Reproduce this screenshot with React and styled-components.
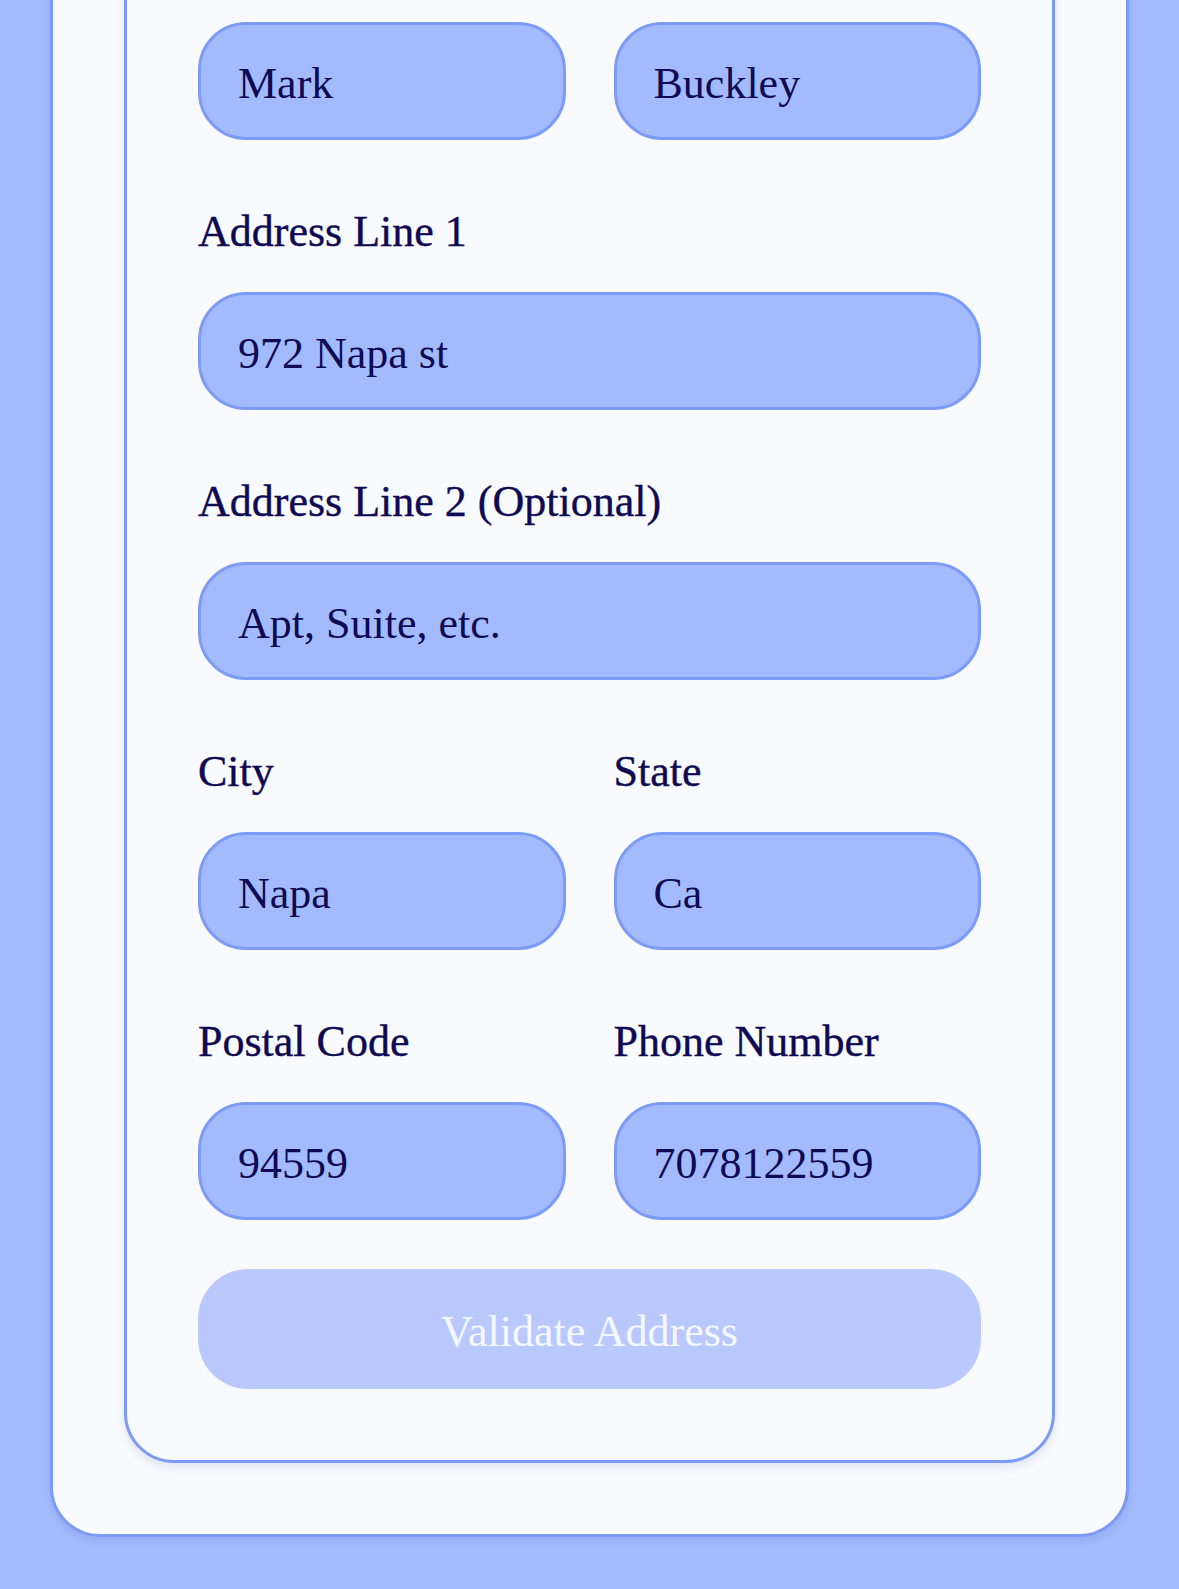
import React from 'react';
import styled, { createGlobalStyle } from 'styled-components';

const GlobalStyle = createGlobalStyle`
  html, body {
    margin: 0;
    padding: 0;
    background: #a3bbfe;
  }
  body {
    font-family: "Liberation Serif", "Times New Roman", serif;
    overflow: hidden;
  }
`;

// page is shown scrolled down: the top of the cards lies above the window
const Page = styled.div`
  margin-top: -126px;
  padding: 0 50px 53px;
`;

const OuterCard = styled.div`
  background: #f9fafe;
  border: 3px solid #7b9bf7;
  border-radius: 50px;
  padding: 71px;
  box-shadow: 0 4px 8px rgba(40, 60, 140, 0.12);
`;

const InnerCard = styled.form`
  background: #f9fafe;
  border: 3px solid #7b9bf7;
  border-radius: 50px;
  padding: 71px;
  box-shadow: 0 4px 8px rgba(40, 60, 140, 0.12);
  display: flex;
  flex-direction: column;
  gap: 66px;
`;

const Row = styled.div`
  display: grid;
  grid-template-columns: 1fr 1fr;
  column-gap: 48px;
`;

const Field = styled.label`
  display: flex;
  flex-direction: column;
  min-width: 0;
`;

const Label = styled.span`
  display: block;
  height: 52px;
  line-height: 52px;
  margin-bottom: 34px;
  font-size: 44px;
  color: #0e0a54;
  white-space: nowrap;
  -webkit-text-stroke: 0.4px #0e0a54;
`;

const Input = styled.input`
  box-sizing: border-box;
  width: 100%;
  height: 118px;
  padding: 4px 37px 0;
  border: 3px solid #7b9bf7;
  border-radius: 48px;
  background: #a3bbfe;
  font-family: inherit;
  font-size: 44px;
  color: #0e0a54;
  outline: none;

  &::placeholder {
    color: #0e0a54;
    opacity: 1;
  }
`;

const SubmitButton = styled.button`
  margin-top: -17px;
  height: 120px;
  width: 100%;
  border: none;
  border-radius: 50px;
  background: #bac9fd;
  color: #f6f8ff;
  font-family: inherit;
  font-size: 44px;
  padding-top: 6px;
  cursor: not-allowed;
`;

const TextField = ({ label, value, placeholder }) => (
  <Field>
    {label && <Label>{label}</Label>}
    <Input defaultValue={value} placeholder={placeholder} readOnly />
  </Field>
);

const App = () => {
  return (
    <>
      <GlobalStyle />
      <Page>
        <OuterCard>
          <InnerCard onSubmit={(e) => e.preventDefault()}>
            <Row>
              <TextField value="Mark" />
              <TextField value="Buckley" />
            </Row>
            <TextField label="Address Line 1" value="972 Napa st" />
            <TextField label="Address Line 2 (Optional)" placeholder="Apt, Suite, etc." />
            <Row>
              <TextField label="City" value="Napa" />
              <TextField label="State" value="Ca" />
            </Row>
            <Row>
              <TextField label="Postal Code" value="94559" />
              <TextField label="Phone Number" value="7078122559" />
            </Row>
            <SubmitButton type="submit" disabled>Validate Address</SubmitButton>
          </InnerCard>
        </OuterCard>
      </Page>
    </>
  );
};

export default App;
